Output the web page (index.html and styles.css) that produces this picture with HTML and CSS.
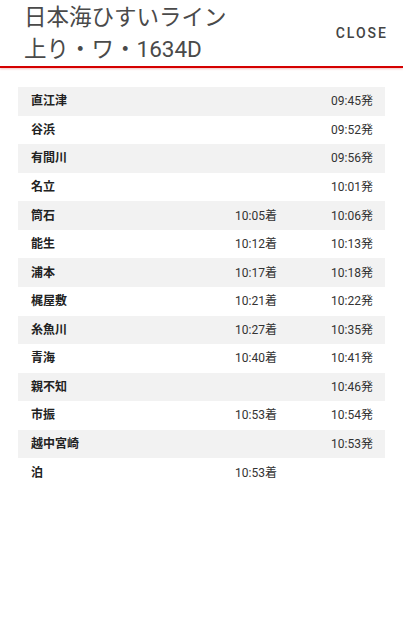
FILE: index.html
```html
<!DOCTYPE html>
<html lang="ja">
<head>
<meta charset="UTF-8">
<meta name="viewport" content="width=device-width, initial-scale=1.0">
<title>日本海ひすいライン 上り・ワ・1634D</title>
<link rel="stylesheet" href="styles.css">
</head>
<body>
<header class="dialog-header">
    <h1 class="dialog-title">日本海ひすいライン<br>上り・ワ・1634D</h1>
    <button class="close-button">CLOSE</button>
</header>
<div class="timetable">
    <div class="stop"><span class="station">直江津</span><span class="arr"></span><span class="dep">09:45発</span></div>
    <div class="stop"><span class="station">谷浜</span><span class="arr"></span><span class="dep">09:52発</span></div>
    <div class="stop"><span class="station">有間川</span><span class="arr"></span><span class="dep">09:56発</span></div>
    <div class="stop"><span class="station">名立</span><span class="arr"></span><span class="dep">10:01発</span></div>
    <div class="stop"><span class="station">筒石</span><span class="arr">10:05着</span><span class="dep">10:06発</span></div>
    <div class="stop"><span class="station">能生</span><span class="arr">10:12着</span><span class="dep">10:13発</span></div>
    <div class="stop"><span class="station">浦本</span><span class="arr">10:17着</span><span class="dep">10:18発</span></div>
    <div class="stop"><span class="station">梶屋敷</span><span class="arr">10:21着</span><span class="dep">10:22発</span></div>
    <div class="stop"><span class="station">糸魚川</span><span class="arr">10:27着</span><span class="dep">10:35発</span></div>
    <div class="stop"><span class="station">青海</span><span class="arr">10:40着</span><span class="dep">10:41発</span></div>
    <div class="stop"><span class="station">親不知</span><span class="arr"></span><span class="dep">10:46発</span></div>
    <div class="stop"><span class="station">市振</span><span class="arr">10:53着</span><span class="dep">10:54発</span></div>
    <div class="stop"><span class="station">越中宮崎</span><span class="arr"></span><span class="dep">10:53発</span></div>
    <div class="stop"><span class="station">泊</span><span class="arr">10:53着</span><span class="dep"></span></div>
</div>
</body>
</html>
```
FILE: styles.css
```css
body {
    margin: 0;
    font-family: Roboto, "Noto Sans CJK JP", sans-serif;
    background: #fff;
    color: #222;
}

.dialog-header {
    display: flex;
    align-items: center;
    justify-content: space-between;
    height: 66px;
    padding: 0 15px 0 24px;
    border-bottom: 2px solid #d50000;
    box-shadow: 0 1px 2px rgba(213, 0, 0, 0.25);
}

.dialog-title {
    margin: 0;
    font-size: 22.5px;
    font-weight: 400;
    line-height: 32px;
    color: #4a4a4a;
}

.close-button {
    background: none;
    border: none;
    padding: 0;
    font-family: Roboto, sans-serif;
    font-size: 14px;
    font-weight: 500;
    letter-spacing: 2px;
    color: #444;
    cursor: pointer;
}

.timetable {
    margin: 19px 18px 0 18px;
}

.stop {
    display: grid;
    grid-template-columns: 1fr 80px 96px;
    align-items: center;
    height: 28.57px;
    padding: 0 12px 0 13px;
    font-size: 12px;
    line-height: 14px;
}

.stop:nth-child(odd) {
    background: #f2f2f2;
}

.station {
    font-weight: 700;
}

.arr, .dep {
    text-align: right;
    color: #333;
}
```
